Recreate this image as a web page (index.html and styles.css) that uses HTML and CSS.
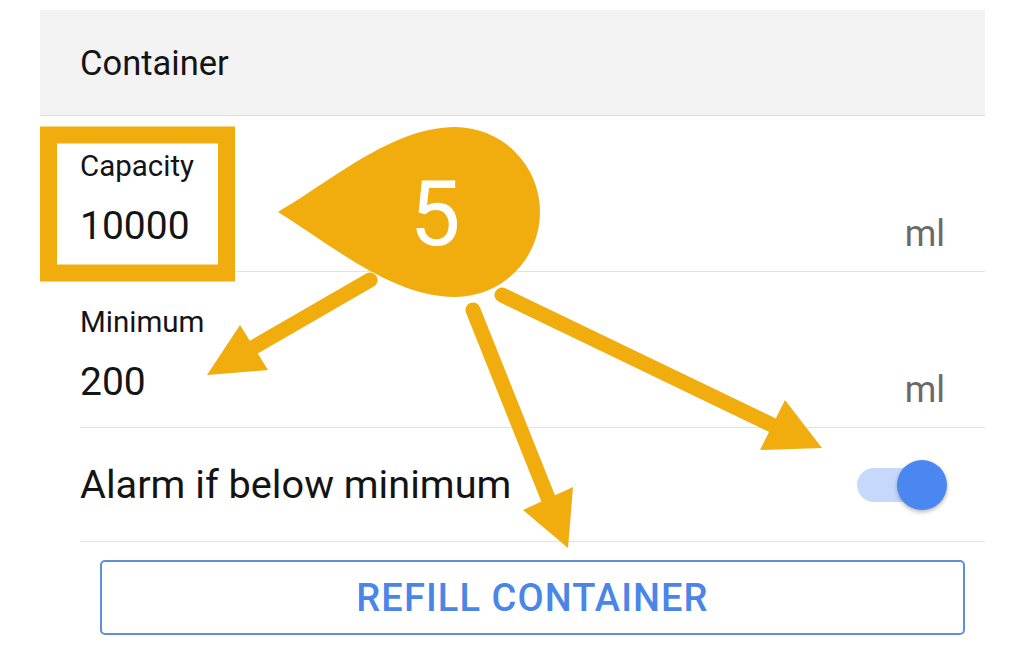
FILE: index.html
```html
<!DOCTYPE html>
<html lang="en">
<head>
  <meta charset="utf-8">
  <title>Container settings</title>
  <link rel="stylesheet" href="styles.css">
</head>
<body>
<div class="card">
  <div class="card-header">Container</div>

  <div class="field">
    <div class="field-main">
      <div class="field-label">Capacity</div>
      <div class="field-value">10000</div>
    </div>
    <div class="field-unit">ml</div>
  </div>

  <div class="field">
    <div class="field-main">
      <div class="field-label">Minimum</div>
      <div class="field-value">200</div>
    </div>
    <div class="field-unit">ml</div>
  </div>

  <div class="toggle-row">
    <span class="toggle-label">Alarm if below minimum</span>
    <span class="switch is-on">
      <span class="switch-track"></span>
      <span class="switch-thumb"></span>
    </span>
  </div>

  <div class="actions">
    <button class="btn-outline" type="button">REFILL CONTAINER</button>
  </div>
</div>

<!-- tutorial overlay: step 5 -->
<svg class="annotations" width="1024" height="655" viewBox="0 0 1024 655">
  <g fill="#f1ad0d" stroke="#f1ad0d">
    <rect x="48.5" y="135" width="178" height="138" fill="none" stroke-width="17"/>
    <path stroke="none" d="M278,212 C330,182 392,127 455,127 A85,85 0 0 1 455,297 C392,297 330,244 278,212 Z"/>

    <path d="M370,280 L254,347" stroke-width="15" stroke-linecap="round" fill="none"/>
    <polygon stroke="none" points="207,375 240,325 268,370"/>

    <path d="M473,310 L548,498" stroke-width="15" stroke-linecap="round" fill="none"/>
    <polygon stroke="none" points="568,548 523,510 573,487"/>

    <path d="M502,295 L772,425" stroke-width="15" stroke-linecap="round" fill="none"/>
    <polygon stroke="none" points="822,448 785,400 760,450"/>
  </g>
  <text class="step-num" x="435" y="245" text-anchor="middle">5</text>
</svg>
</body>
</html>
```

FILE: styles.css
```css
body {
  margin: 0;
  background: #fff;
  font-family: Roboto, "Noto Sans", sans-serif;
  color: #141414;
  overflow: hidden;
}

.card {
  width: 945px;
  margin: 10px 0 0 40px;
}

.card-header {
  height: 106px;
  box-sizing: border-box;
  display: flex;
  align-items: center;
  padding-left: 40px;
  background: #f3f3f3;
  border-bottom: 1px solid #dedede;
  font-size: 34.5px;
}

.field {
  display: flex;
  justify-content: space-between;
  align-items: flex-end;
  margin-left: 40px;
  padding: 34px 40px 23px 0;
  border-bottom: 1px solid #e2e2e2;
}

.field-label {
  font-size: 29.5px;
  line-height: 32px;
  margin-bottom: 22px;
}

.field-value {
  font-size: 39px;
  line-height: 44px;
}

.field-unit {
  font-size: 36px;
  line-height: 28px;
  color: #6a6a6a;
}

.toggle-row {
  height: 113px;
  display: flex;
  align-items: center;
  justify-content: space-between;
  margin-left: 40px;
  padding-right: 38px;
  border-bottom: 1px solid #e2e2e2;
}

.toggle-label {
  font-size: 39.7px;
}

.switch {
  position: relative;
  width: 90px;
  height: 50px;
}

.switch-track {
  position: absolute;
  left: 0;
  top: 8px;
  width: 80px;
  height: 34px;
  border-radius: 17px;
  background: #c7d9fb;
}

.switch-thumb {
  position: absolute;
  right: 0;
  top: 0;
  width: 50px;
  height: 50px;
  border-radius: 50%;
  background: #4a87f1;
  box-shadow: 0 2px 4px rgba(0, 0, 0, 0.3);
}

.actions {
  padding: 18px 20px 0 60px;
}

.btn-outline {
  width: 100%;
  height: 75px;
  background: #fff;
  border: 2px solid #5d90dc;
  border-radius: 5px;
  color: #4a86e8;
  font-family: Roboto, "Noto Sans", sans-serif;
  font-weight: 500;
  font-size: 38px;
  letter-spacing: 1.1px;
}

.annotations {
  position: absolute;
  top: 0;
  left: 0;
  pointer-events: none;
}

.step-num {
  font-family: Roboto, sans-serif;
  font-size: 91px;
  fill: #fff;
}
```
